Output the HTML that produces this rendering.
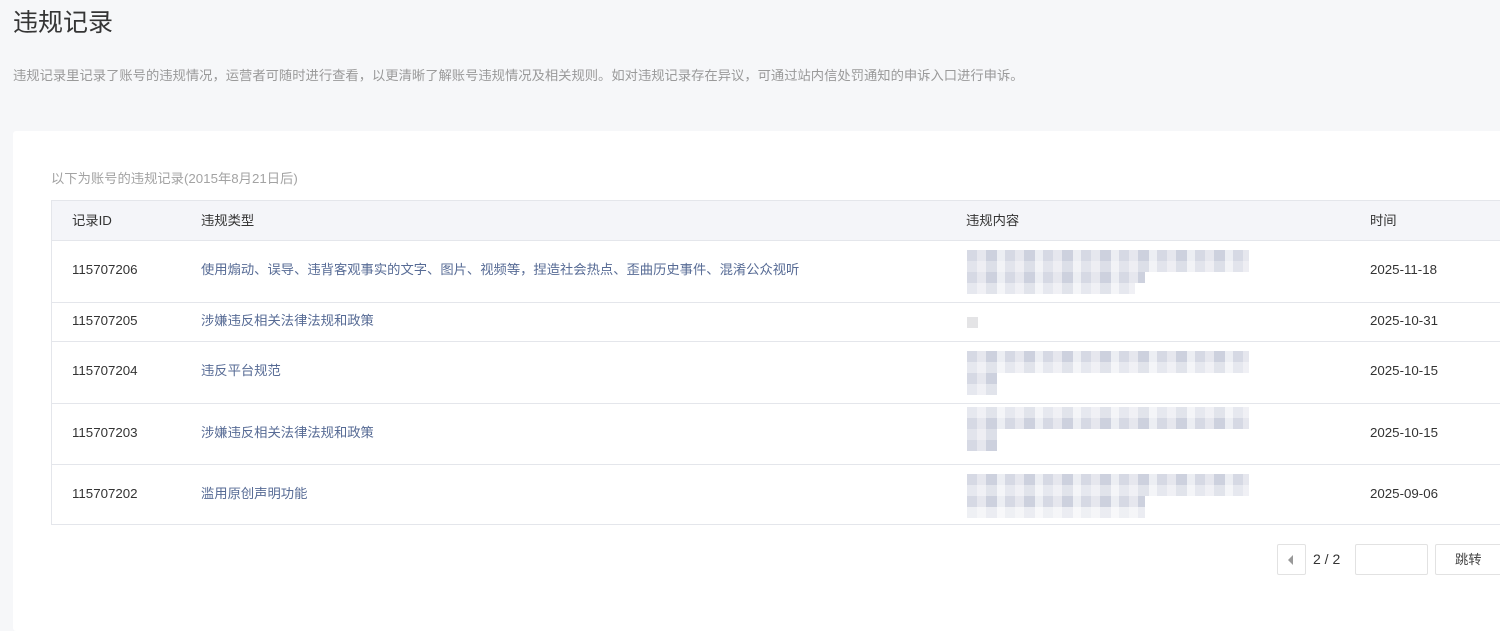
<!DOCTYPE html>
<html><head><meta charset="utf-8"><style>
*{margin:0;padding:0;box-sizing:border-box}
body{width:1500px;height:610px;overflow:hidden;background:#f6f7f9;font-family:"Liberation Sans","Noto Sans CJK SC",sans-serif;position:relative;color:#333}
.a{position:absolute;white-space:nowrap}
h1{position:absolute;left:13px;top:6px;font-size:25px;font-weight:normal;color:#353535;line-height:34px}
.desc{left:13px;top:67px;font-size:13.3px;color:#9a9a9a;line-height:18px}
.card{position:absolute;left:13px;top:131px;width:1500px;height:500px;background:#fff;border-radius:3px}
.cap{left:51px;top:170px;font-size:13.3px;color:#a3a3a3;line-height:18px}
.tbl{position:absolute;left:51px;top:200px;width:1460px;height:325px;border:1px solid #e4e6eb}
.hd{position:absolute;left:0;top:0;right:0;height:40px;background:#f4f5f9;border-bottom:1px solid #e4e6eb}
.row{position:absolute;left:0;right:0;border-bottom:1px solid #e4e6eb}
.t{font-size:13.3px;line-height:18px}
.ty{color:#576b95}
.blk{position:absolute;left:915px;height:11px;background:repeating-linear-gradient(90deg,#d6d9e4 0 10px,#e6e7ee 10px 19px,#cdd1de 19px 30px,#eceef3 30px 38px)}
.btn{position:absolute;border:1px solid #e2e2e2;background:#fff;border-radius:2px}
</style></head><body>
<h1>违规记录</h1>
<div class="a desc">违规记录里记录了账号的违规情况，运营者可随时进行查看，以更清晰了解账号违规情况及相关规则。如对违规记录存在异议，可通过站内信处罚通知的申诉入口进行申诉。</div>
<div class="card"></div>
<div class="a cap">以下为账号的违规记录(2015年8月21日后)</div>
<div class="tbl">
<div class="hd"></div>
<div class="a t" style="left:20px;top:11px">记录ID</div>
<div class="a t" style="left:149px;top:11px">违规类型</div>
<div class="a t" style="left:914px;top:11px">违规内容</div>
<div class="a t" style="left:1318px;top:11px">时间</div>

<div class="row" style="top:40px;height:62px"></div>
<div class="a t" style="left:20px;top:60px">115707206</div>
<div class="a t ty" style="left:149px;top:60px">使用煽动、误导、违背客观事实的文字、图片、视频等，捏造社会热点、歪曲历史事件、混淆公众视听</div>
<div class="blk" style="top:49px;width:282px"></div><div class="blk" style="top:60px;width:282px;opacity:.7"></div><div class="blk" style="top:71px;width:178px"></div><div class="blk" style="top:82px;width:168px;opacity:.6"></div>
<div class="a t" style="left:1318px;top:60px">2025-11-18</div>

<div class="row" style="top:102px;height:39px"></div>
<div class="a t" style="left:20px;top:111px">115707205</div>
<div class="a t ty" style="left:149px;top:111px">涉嫌违反相关法律法规和政策</div>
<div class="a" style="left:915px;top:116px;width:11px;height:11px;background:#e4e4e6"></div>
<div class="a t" style="left:1318px;top:111px">2025-10-31</div>

<div class="row" style="top:141px;height:62px"></div>
<div class="a t" style="left:20px;top:161px">115707204</div>
<div class="a t ty" style="left:149px;top:161px">违反平台规范</div>
<div class="blk" style="top:150px;width:282px"></div><div class="blk" style="top:161px;width:282px;opacity:.6"></div><div class="blk" style="top:172px;width:30px"></div><div class="blk" style="top:183px;width:30px;opacity:.6"></div>
<div class="a t" style="left:1318px;top:161px">2025-10-15</div>

<div class="row" style="top:203px;height:61px"></div>
<div class="a t" style="left:20px;top:223px">115707203</div>
<div class="a t ty" style="left:149px;top:223px">涉嫌违反相关法律法规和政策</div>
<div class="blk" style="top:206px;width:282px;opacity:.6"></div><div class="blk" style="top:217px;width:282px"></div><div class="blk" style="top:228px;width:30px;opacity:.7"></div><div class="blk" style="top:239px;width:30px"></div>
<div class="a t" style="left:1318px;top:223px">2025-10-15</div>

<div class="row" style="top:264px;height:61px;border-bottom:none"></div>
<div class="a t" style="left:20px;top:284px">115707202</div>
<div class="a t ty" style="left:149px;top:284px">滥用原创声明功能</div>
<div class="blk" style="top:273px;width:282px"></div><div class="blk" style="top:284px;width:282px;opacity:.6"></div><div class="blk" style="top:295px;width:178px"></div><div class="blk" style="top:306px;width:178px;opacity:.4"></div>
<div class="a t" style="left:1318px;top:284px">2025-09-06</div>
</div>

<div class="btn" style="left:1277px;top:544px;width:29px;height:31px"></div>
<div class="a" style="left:1288px;top:555px;width:0;height:0;border-top:5px solid transparent;border-bottom:5px solid transparent;border-right:5px solid #999"></div>
<div class="a t" style="left:1313px;top:550px;font-size:14px">2 / 2</div>
<div class="btn" style="left:1355px;top:544px;width:73px;height:31px"></div>
<div class="btn" style="left:1435px;top:544px;width:70px;height:31px"></div>
<div class="a t" style="left:1455px;top:551px;color:#444">跳转</div>
</body></html>
